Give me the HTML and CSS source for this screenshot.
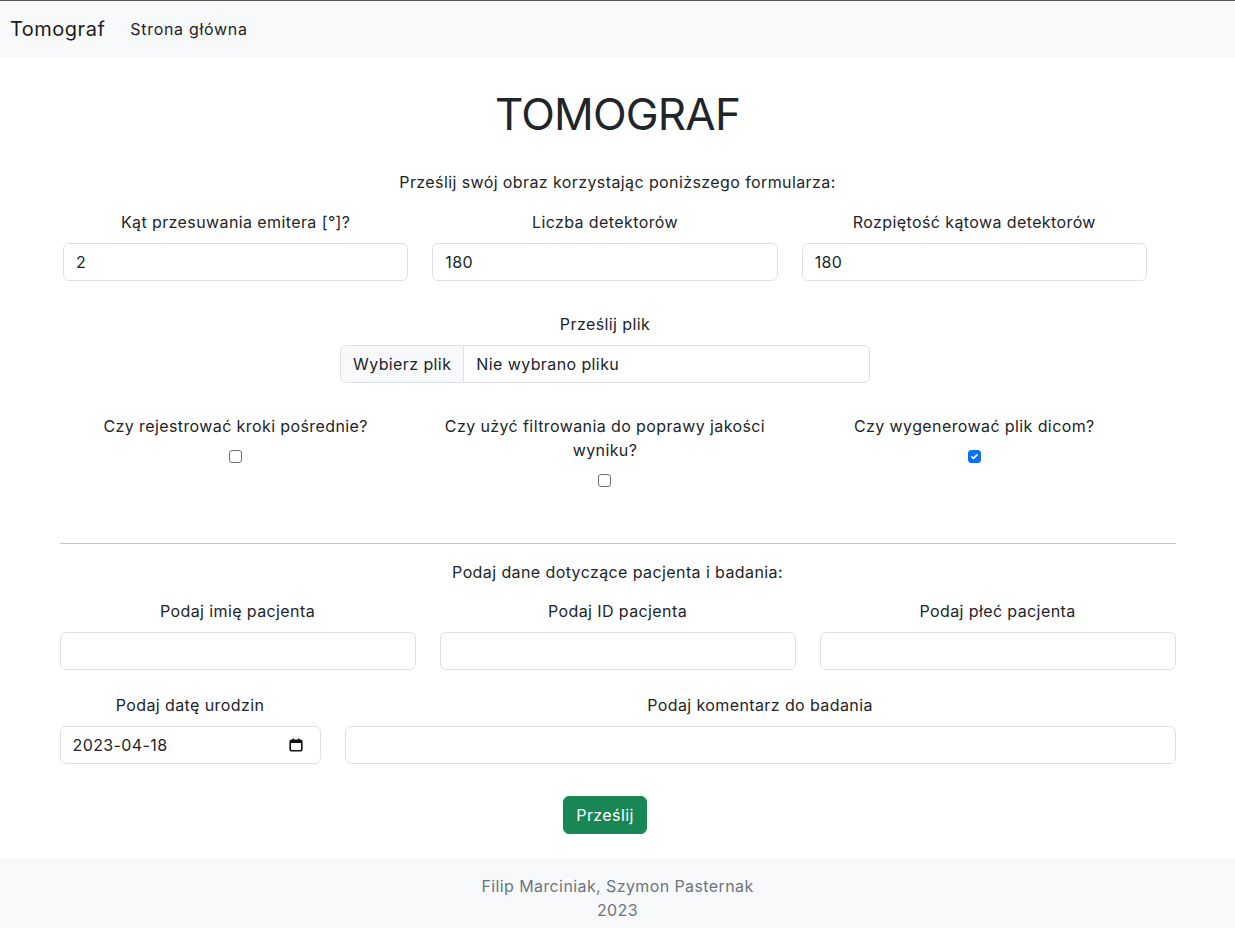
FILE: index.html
```html
<!DOCTYPE html>
<html lang="pl">
<head>
<meta charset="utf-8">
<title>Tomograf</title>
<link rel="stylesheet" href="styles.css">
</head>
<body>
<nav class="navbar">
  <a class="brand" href="#">Tomograf</a>
  <a class="nav-link" href="#">Strona główna</a>
</nav>
<main class="container">
  <h1 class="title">TOMOGRAF</h1>
  <form class="form">
    <p class="intro">Prześlij swój obraz korzystając poniższego formularza:</p>
    <div class="grid3 narrow">
      <div class="field">
        <label class="label">Kąt przesuwania emitera [°]?</label>
        <div class="input">2</div>
      </div>
      <div class="field">
        <label class="label">Liczba detektorów</label>
        <div class="input">180</div>
      </div>
      <div class="field">
        <label class="label">Rozpiętość kątowa detektorów</label>
        <div class="input">180</div>
      </div>
    </div>
    <div class="file-field">
      <label class="label">Prześlij plik</label>
      <div class="file-input">
        <span class="file-btn">Wybierz plik</span>
        <span class="file-name">Nie wybrano pliku</span>
      </div>
    </div>
    <div class="grid3 narrow checks">
      <div class="check">
        <label class="label">Czy rejestrować kroki pośrednie?</label>
        <span class="box"></span>
      </div>
      <div class="check">
        <label class="label">Czy użyć filtrowania do poprawy jakości wyniku?</label>
        <span class="box"></span>
      </div>
      <div class="check">
        <label class="label">Czy wygenerować plik dicom?</label>
        <span class="box checked"><svg viewBox="0 0 20 20" width="13" height="13"><path d="M5 10.5l3 3 6.5-6.5" fill="none" stroke="#fff" stroke-width="3" stroke-linecap="round" stroke-linejoin="round"/></svg></span>
      </div>
    </div>
    <hr class="sep">
    <p class="intro2">Podaj dane dotyczące pacjenta i badania:</p>
    <div class="grid3 wide">
      <div class="field">
        <label class="label">Podaj imię pacjenta</label>
        <div class="input"></div>
      </div>
      <div class="field">
        <label class="label">Podaj ID pacjenta</label>
        <div class="input"></div>
      </div>
      <div class="field">
        <label class="label">Podaj płeć pacjenta</label>
        <div class="input"></div>
      </div>
    </div>
    <div class="grid-date">
      <div class="field">
        <label class="label">Podaj datę urodzin</label>
        <div class="input date">2023-04-18
          <svg class="cal" viewBox="0 0 14 14" width="14" height="14"><rect x="1.2" y="2.2" width="11.6" height="10.6" rx="1.2" fill="none" stroke="#111" stroke-width="1.6"/><rect x="1" y="2" width="12" height="3" fill="#111"/><rect x="3.5" y="0.5" width="1.6" height="2.5" fill="#111"/><rect x="8.9" y="0.5" width="1.6" height="2.5" fill="#111"/></svg>
        </div>
      </div>
      <div class="field">
        <label class="label">Podaj komentarz do badania</label>
        <div class="input"></div>
      </div>
    </div>
    <div class="submit-row">
      <button type="button" class="btn">Prześlij</button>
    </div>
  </form>
</main>
<footer class="footer">
  <div>Filip Marciniak, Szymon Pasternak</div>
  <div>2023</div>
</footer>
</body>
</html>
```
FILE: styles.css
```css
* { box-sizing: border-box; }
html, body { margin: 0; padding: 0; }
body {
  font-family: Inter, "Noto Sans", sans-serif;
  font-size: 16px;
  line-height: 24px;
  letter-spacing: 0.4px;
  color: #212529;
  background: #fff;
  border-top: 1px solid #555;
}
a { text-decoration: none; }
.navbar {
  background: #f8f9fa;
  height: 56px;
  display: flex;
  align-items: center;
  padding: 0 10px;
}
.brand {
  font-size: 20px;
  line-height: 30px;
  letter-spacing: 0.5px;
  color: #1c1c1c;
  margin-right: 25px;
}
.nav-link {
  color: #232323;
  font-size: 16px;
  letter-spacing: 0.7px;
}
.container {
  width: 1116px;
  margin: 0 auto;
  padding-bottom: 25px;
}
.title {
  margin: 29px 0 0;
  font-size: 44px;
  line-height: 56px;
  letter-spacing: -0.8px;
  font-weight: 400;
  text-align: center;
}
.form { margin: 0; }
.intro {
  margin: 28px 0 0;
  text-align: center;
}
.label {
  display: block;
  text-align: center;
  margin-bottom: 9px;
}
.grid3 {
  display: grid;
  grid-template-columns: repeat(3, 1fr);
  column-gap: 24px;
}
.grid3.narrow {
  width: 1084px;
  margin-left: 3.5px;
}
.grid3.narrow:first-of-type { margin-top: 16px; }
.field { display: flex; flex-direction: column; }
.input {
  height: 38px;
  border: 1px solid #dee2e6;
  border-radius: 6px;
  padding: 6px 12px;
  line-height: 24px;
  background: #fff;
}
.file-field {
  width: 530px;
  margin: 31px 0 0 280.5px;
}
.file-input {
  display: flex;
  height: 38px;
  border: 1px solid #dee2e6;
  border-radius: 6px;
  overflow: hidden;
}
.file-btn {
  background: #f8f9fa;
  padding: 6px 12px;
  border-right: 1px solid #dee2e6;
}
.file-name { padding: 6px 12px; }
.checks { margin-top: 31px; }
.check {
  display: flex;
  flex-direction: column;
  align-items: center;
}
.check .label { margin-bottom: 12px; padding: 0 10px; }
.box {
  width: 13px;
  height: 13px;
  border: 1px solid #6f7275;
  border-radius: 3px;
  display: flex;
  align-items: center;
  justify-content: center;
  background: #fff;
}
.box.checked {
  background: #0d6efd;
  border-color: #0d6efd;
}
.sep {
  margin: 56px 0 0;
  border: 0;
  border-top: 1px solid #c8c9ca;
}
.intro2 {
  margin: 16px 0 0;
  text-align: center;
}
.grid3.wide { margin-top: 15px; }
.grid-date {
  display: grid;
  grid-template-columns: 261px 1fr;
  column-gap: 24px;
  margin-top: 23px;
}
.date {
  display: flex;
  justify-content: space-between;
  align-items: center;
  padding-right: 17px;
}
.submit-row {
  display: flex;
  justify-content: center;
  width: 1084px;
  margin: 32px 0 0 3.5px;
}
.btn {
  font-family: inherit;
  font-size: 16px;
  line-height: 24px;
  letter-spacing: 0.4px;
  color: #fff;
  background: #198754;
  border: 1px solid #198754;
  border-radius: 6px;
  padding: 6px 12px;
}
.footer {
  background: #f8f9fa;
  color: #6c757d;
  text-align: center;
  padding: 15px 0 22px;
}
```
